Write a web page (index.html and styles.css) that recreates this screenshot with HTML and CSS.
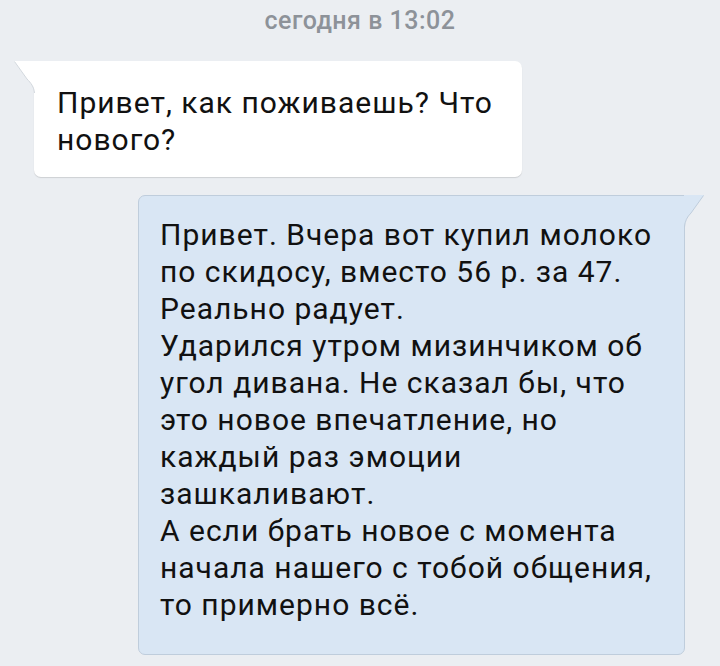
FILE: index.html
```html
<html>
<head>
<meta charset="UTF-8">
<link rel="stylesheet" href="styles.css">
</head>
<body>
<div class="chat">
<div class="date">сегодня в 13:02</div>
<div class="msg in">
<svg class="tail" width="21" height="32" viewBox="0 0 21 32"><path d="M0 0 H21 V32 C20 26 17 22 13 18 Z" fill="#fff"/><path d="M0.5 0.5 L13 18 C17 22 20 26 20.5 32" fill="none" stroke="#d3d8de" stroke-width="1"/></svg>
<p>Привет, как поживаешь? Что<br>нового?</p>
</div>
<div class="msg out">
<svg class="tail" width="20" height="32" viewBox="0 0 20 32"><path d="M20 0 H0 V32 C1 26 3 22 7 18 Z" fill="#d9e6f4"/><path d="M19.5 0.5 L7 18 C3 22 1 26 0.5 32" fill="none" stroke="#bfcddc" stroke-width="1"/></svg>
<p>Привет. Вчера вот купил молоко<br>по скидосу, вместо 56 р. за 47.<br>Реально радует.</p>
<p>Ударился утром мизинчиком об<br>угол дивана. Не сказал бы, что<br>это новое впечатление, но<br>каждый раз эмоции<br>зашкаливают.</p>
<p>А если брать новое с момента<br>начала нашего с тобой общения,<br>то примерно всё.</p>
</div>
</div>
</body>
</html>
```
FILE: styles.css
```css
*{
margin:0;
padding:0;
}
body{
background:#ebeef2;
font-family:Roboto,"Noto Sans",sans-serif;
color:#111;
}
.chat{
width:720px;
height:666px;
overflow:hidden;
}
.date{
text-align:center;
color:#8d9299;
font-size:25px;
font-weight:500;
letter-spacing:0.5px;
line-height:30px;
padding-top:6px;
height:55px;
}
.msg{
position:relative;
font-size:30px;
letter-spacing:1px;
line-height:37px;
border-radius:7px;
white-space:nowrap;
}
.msg .tail{
position:absolute;
top:0;
}
.in{
background:#fff;
margin-left:34px;
width:488px;
padding:23px 23px 19px;
box-sizing:border-box;
box-shadow:0 1px 1px rgba(0,0,0,0.13);
border-top-left-radius:0;
}
.in .tail{
left:-20px;
}
.out{
background:#d9e6f4;
border:1px solid #bfcddc;
margin:18px 0 0 138px;
width:547px;
padding:20px 20px 31px 21px;
box-sizing:border-box;
border-top-right-radius:0;
}
.out .tail{
right:-20px;
top:-1px;
}
```
